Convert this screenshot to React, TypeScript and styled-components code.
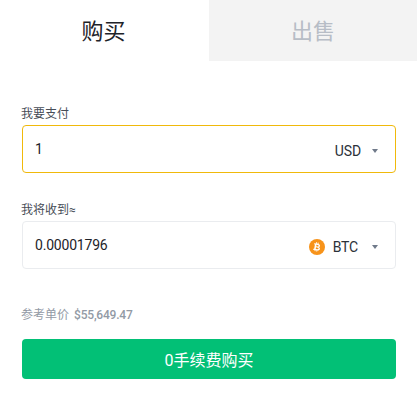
import React from 'react';
import styled, { createGlobalStyle } from 'styled-components';

const GlobalStyle = createGlobalStyle`
  html, body {
    margin: 0;
    padding: 0;
    background: #fff;
    font-family: Roboto, "Noto Sans CJK SC", sans-serif;
  }
`;

const Page = styled.div`
  width: 417px;
  height: 415px;
  overflow: hidden;
`;

const Tabs = styled.div`
  display: grid;
  grid-template-columns: 209px 208px;
  height: 61px;
`;

const Tab = styled.div<{ $active?: boolean }>`
  display: flex;
  align-items: center;
  justify-content: center;
  padding: 0 ${(p) => (p.$active ? '2px' : '0')} 3px 0;
  box-sizing: border-box;
  font-size: 22px;
  color: ${(p) => (p.$active ? '#1e2329' : '#b7bdc6')};
  background: ${(p) => (p.$active ? '#fff' : '#f3f3f3')};
`;

const Form = styled.div`
  padding: 45px 21px 0 22px;
`;

const Field = styled.div`
  margin-bottom: 29px;
`;

const Label = styled.div`
  font-size: 12px;
  line-height: 16px;
  height: 19px;
  margin-left: -1px;
  color: #474d57;
`;

const InputBox = styled.div<{ $focused?: boolean }>`
  display: flex;
  align-items: center;
  height: 48px;
  box-sizing: border-box;
  padding: 0 17px 0 12px;
  border: 1px solid ${(p) => (p.$focused ? '#f0b90b' : '#eaecef')};
  border-radius: 4px;
`;

const Value = styled.div`
  flex: 1;
  font-size: 14px;
  letter-spacing: -0.2px;
  color: #1e2329;
`;

const Currency = styled.div`
  display: flex;
  align-items: center;
  font-size: 14px;
  color: #2b3139;
  margin-top: 4px;
`;

const Code = styled.span`
  margin: 0 4px 0 8px;
  letter-spacing: -0.2px;
`;

const Ticker = styled.span`
  margin-right: 1px;
  letter-spacing: -0.1px;
`;

const Caret = styled.span`
  width: 0;
  height: 0;
  margin-left: 10px;
  border-left: 3.5px solid transparent;
  border-right: 3.5px solid transparent;
  border-top: 4px solid #707a8a;
`;

const Price = styled.div`
  font-size: 12px;
  line-height: 16px;
  margin: 38px 0 16px -1px;
  color: #929aa5;
`;

const PriceValue = styled.span`
  margin-left: 5px;
  font-weight: 500;
  letter-spacing: -0.2px;
`;

const BuyButton = styled.button`
  display: block;
  width: 374px;
  height: 40px;
  padding: 0;
  border: 0;
  border-radius: 4px;
  background: #02c076;
  color: #fff;
  font-family: inherit;
  font-size: 16px;
  font-weight: 400;
`;

const BtcIcon = () => (
  <svg width="16" height="16" viewBox="0 0 16 16" aria-hidden="true">
    <circle cx="8" cy="8" r="8" fill="#f7931a" />
    <path
      fill="#fff"
      fillRule="evenodd"
      transform="rotate(10 8 8)"
      d="M6.2 3.4h1v1.3h.8V3.4h1v1.4c1.1.2 1.8.9 1.8 1.8 0 .6-.3 1.1-.8 1.3.7.2 1.2.8 1.2 1.5 0 1.1-.9 1.8-2.2 1.9v1.2h-1v-1.2h-.8v1.2h-1v-1.2H4.6v-1h.9V5.8h-.9v-1h1.6zM7.1 5.9v1.6h1.4c.5 0 .9-.3.9-.8s-.4-.8-.9-.8zm0 2.6v1.7h1.7c.6 0 1-.3 1-.9s-.4-.8-1-.8z"
    />
  </svg>
);

export default function App() {
  return (
    <Page>
      <GlobalStyle />
      <Tabs>
        <Tab $active>购买</Tab>
        <Tab>出售</Tab>
      </Tabs>
      <Form>
        <Field>
          <Label>我要支付</Label>
          <InputBox $focused>
            <Value>1</Value>
            <Currency>
              <Ticker>USD</Ticker>
              <Caret />
            </Currency>
          </InputBox>
        </Field>
        <Field>
          <Label>我将收到≈</Label>
          <InputBox>
            <Value>0.00001796</Value>
            <Currency>
              <BtcIcon />
              <Code>BTC</Code>
              <Caret />
            </Currency>
          </InputBox>
        </Field>
        <Price>
          参考单价
          <PriceValue>$55,649.47</PriceValue>
        </Price>
        <BuyButton>0手续费购买</BuyButton>
      </Form>
    </Page>
  );
}
